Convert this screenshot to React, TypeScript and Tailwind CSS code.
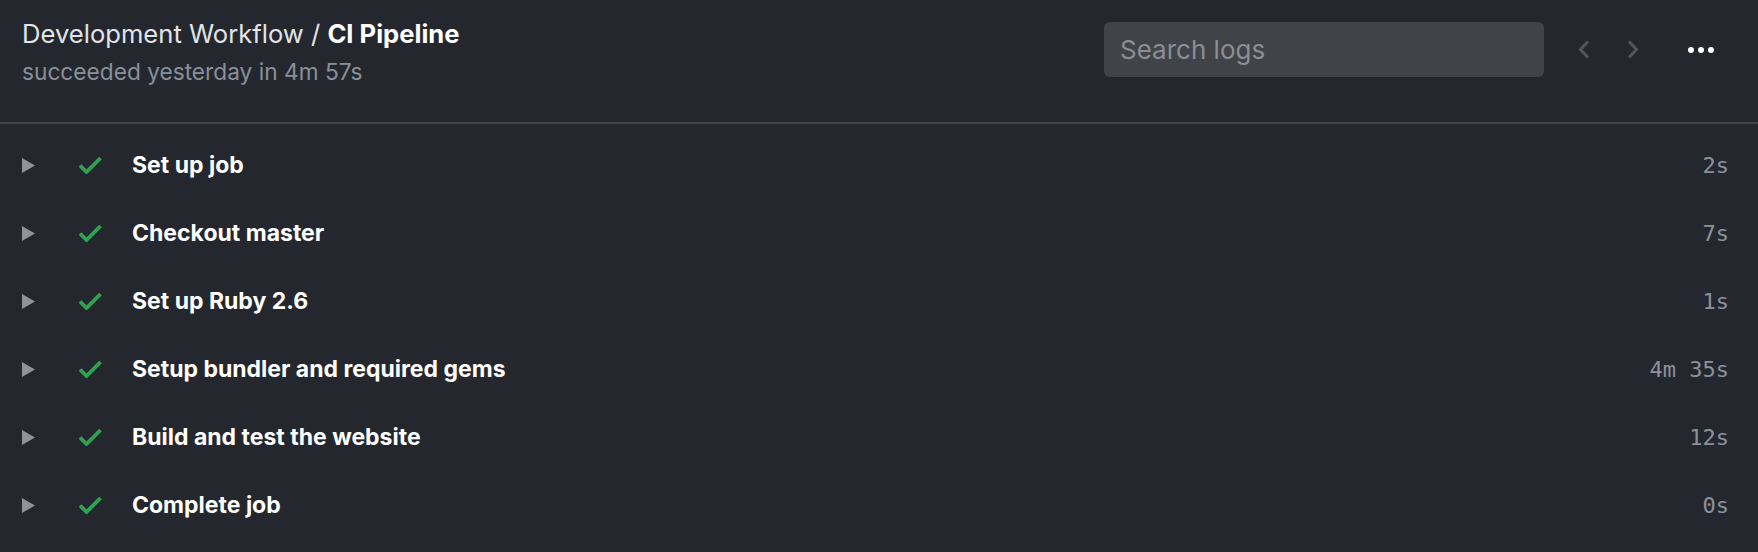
import React from "react";

const steps = [
  { name: "Set up job", time: "2s" },
  { name: "Checkout master", time: "7s" },
  { name: "Set up Ruby 2.6", time: "1s" },
  { name: "Setup bundler and required gems", time: "4m 35s" },
  { name: "Build and test the website", time: "12s" },
  { name: "Complete job", time: "0s" },
];

function Caret() {
  return (
    <svg width="13" height="15" viewBox="0 0 13 15" className="block">
      <polygon points="0,0 13,7.5 0,15" fill="#8d929b" />
    </svg>
  );
}

function Check() {
  return (
    <svg width="24" height="18" viewBox="0 0 24 18" className="block">
      <path
        d="M2 9.5 L8.5 16 L22.5 2"
        fill="none"
        stroke="#2ea44f"
        strokeWidth="3.8"
        strokeLinecap="butt"
        strokeLinejoin="miter"
      />
    </svg>
  );
}

function Chevron({ dir }: { dir: "left" | "right" }) {
  return (
    <svg width="12" height="19" viewBox="0 0 12 19" className="block">
      <path
        d={dir === "left" ? "M10 1.5 L2.5 9.5 L10 17.5" : "M2 1.5 L9.5 9.5 L2 17.5"}
        fill="none"
        stroke="#50565f"
        strokeWidth="3"
      />
    </svg>
  );
}

export default function App() {
  return (
    <div
      className="min-h-screen w-full bg-[#24282e] text-white"
      style={{ fontFamily: "Inter, 'Noto Sans', sans-serif" }}
    >
      {/* Header */}
      <header className="flex h-[124px] items-start justify-between border-b-2 border-[#41464e] pl-[22px] pr-[44px]">
        <div className="pt-[19px]">
          <h1 className="text-[25.6px] leading-[30px] text-[#e1e4e8]">
            Development Workflow /{" "}
            <span className="font-bold text-white">CI Pipeline</span>
          </h1>
          <p className="mt-[9px] text-[22.7px] leading-[28px] text-[#8a9099]">
            succeeded yesterday in 4m 57s
          </p>
        </div>
        <div className="flex items-center pt-[22px]">
          <input
            type="text"
            placeholder="Search logs"
            className="h-[55px] w-[440px] rounded-[6px] bg-[#404348] px-[16px] text-[26px] text-white outline-none placeholder:text-[#8b8e93]"
          />
          <button className="ml-[34px]">
            <Chevron dir="left" />
          </button>
          <button className="ml-[37px]">
            <Chevron dir="right" />
          </button>
          <button className="ml-[49px] flex items-center gap-[4px]">
            <span className="h-[6px] w-[6px] rounded-full bg-white" />
            <span className="h-[6px] w-[6px] rounded-full bg-white" />
            <span className="h-[6px] w-[6px] rounded-full bg-white" />
          </button>
        </div>
      </header>

      {/* Steps */}
      <ul className="pt-[7px]">
        {steps.map((step) => (
          <li
            key={step.name}
            className="flex h-[68px] items-center pl-[22px] pr-[29px]"
          >
            <Caret />
            <span className="ml-[43px]">
              <Check />
            </span>
            <span className="ml-[30px] flex-1 text-[23px] font-bold text-white">
              {step.name}
            </span>
            <span
              className="text-[22px] text-[#8b929b]"
              style={{ fontFamily: "'DejaVu Sans Mono', monospace" }}
            >
              {step.time}
            </span>
          </li>
        ))}
      </ul>
    </div>
  );
}
